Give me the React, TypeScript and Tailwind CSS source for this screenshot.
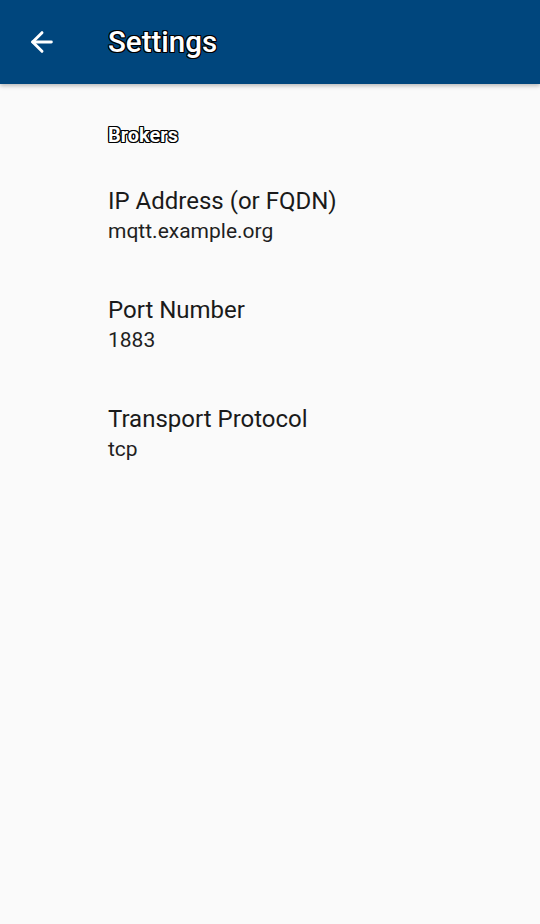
import { ArrowLeft } from 'lucide-react';

const items = [
  { title: 'IP Address (or FQDN)', value: 'mqtt.example.org' },
  { title: 'Port Number', value: '1883' },
  { title: 'Transport Protocol', value: 'tcp' },
];

const outline =
  '[text-shadow:-1px_-1px_0_#000,1px_-1px_0_#000,-1px_1px_0_#000,1px_1px_0_#000,0_1px_0_#000,0_-1px_0_#000,1px_0_0_#000,-1px_0_0_#000]';

export default function App() {
  return (
    <div className="min-h-[924px] w-[540px] bg-[#fafafa] font-['Roboto',sans-serif]">
      <header className="h-[84px] bg-[#00467d] flex items-center shadow-[0_2px_4px_rgba(0,0,0,0.25)] relative z-10">
        <button className="w-[108px] flex items-center pl-[26px] text-white">
          <ArrowLeft size={32} strokeWidth={2.2} />
        </button>
        <h1 className={`text-[29.5px] font-medium text-white leading-none mt-[2px] ${outline}`}>Settings</h1>
      </header>

      <div className="pl-[108px]">
        <div className={`pt-[39px] pb-[13px] text-[20px] leading-[24px] font-bold text-white ${outline}`}>
          Brokers
        </div>
        {items.map((item) => (
          <div key={item.title} className="pt-[25px] pb-[24px]">
            <div className="text-[24px] leading-[32px] text-[#1a1a1a]">{item.title}</div>
            <div className="text-[21px] leading-[28px] text-[#1f1f1f]">{item.value}</div>
          </div>
        ))}
      </div>
    </div>
  );
}
